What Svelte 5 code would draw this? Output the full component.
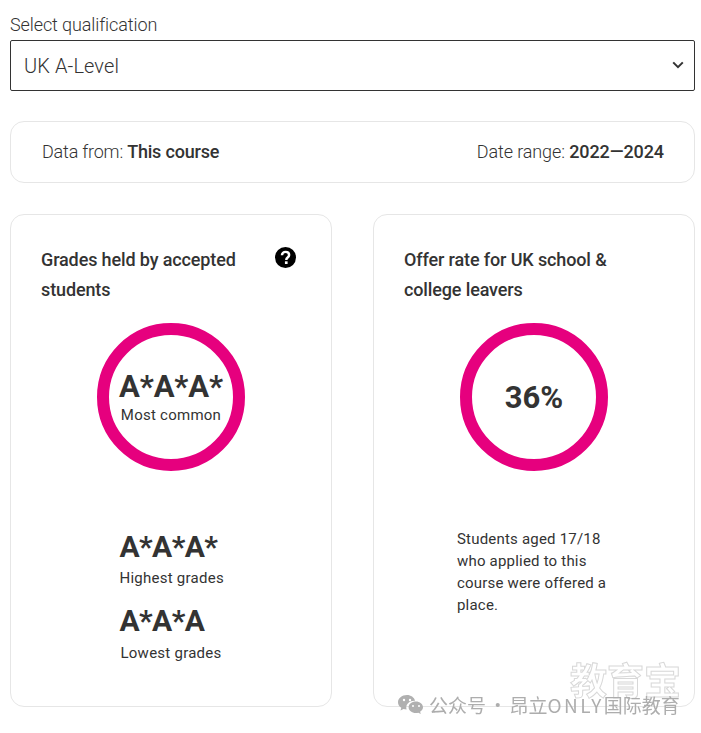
<script>
  const lower = [
    { grade: 'A*A*A*', label: 'Highest grades' },
    { grade: 'A*A*A', label: 'Lowest grades' }
  ];
</script>

<div class="page">
  <div class="label">Select qualification</div>
  <div class="select">
    <span>UK A-Level</span>
    <svg class="chev" width="12" height="8" viewBox="0 0 12 8"><path d="M1.2 1.4 6 6.200l4.800-4.800" fill="none" stroke="#333" stroke-width="2"/></svg>
  </div>

  <div class="bar">
    <span class="from">Data from: <b>This course</b></span>
    <span class="range">Date range: <b>2022—2024</b></span>
  </div>

  <div class="cards">
    <section class="card">
      <div class="head">
        <h3>Grades held by accepted students</h3>
        <svg class="help" width="21" height="21" viewBox="0 0 22 22">
          <circle cx="11" cy="11" r="11" fill="#000"/>
          <path d="M7.300 8.700c0-2.200 1.600-3.600 3.800-3.600s3.700 1.300 3.700 3.200c0 1.500-.9 2.200-1.800 2.900-.8.600-1.100 1-1.100 2v.4" fill="none" stroke="#fff" stroke-width="2.600"/>
          <rect x="10.400" y="15" width="2.800" height="2.800" fill="#fff"/>
        </svg>
      </div>
      <div class="ring-wrap">
        <div class="ring">
          <div class="big">A*A*A*</div>
          <div class="small">Most common</div>
        </div>
      </div>
      <div class="lower">
        {#each lower as item}
          <div class="big">{item.grade}</div>
          <div class="small cap">{item.label}</div>
        {/each}
      </div>
    </section>

    <section class="card">
      <div class="head">
        <h3>Offer rate for UK school &amp; college leavers</h3>
      </div>
      <div class="ring-wrap">
        <div class="ring"><div class="pct">36%</div></div>
      </div>
      <p class="note">Students aged 17/18 who applied to this course were offered a place.</p>
    </section>
  </div>

  <div class="mark-big">教育宝</div>
  <div class="mark">
    <svg width="27" height="22" viewBox="0 0 27 22">
      <path d="M10 1C4.800 1 1 4.300 1 8.200c0 2.300 1.300 4.200 3.300 5.600L3.500 16.500l3-1.600c1 .3 2 .5 3.100.5-.2-.7-.3-1.300-.3-2 0-3.800 3.500-6.700 8-6.700h.8C17.100 3.300 13.900 1 10 1z" fill="#b0b0b0"/>
      <path d="M26 13.300c0-3.200-3.200-5.800-7.200-5.800s-7.200 2.600-7.200 5.800 3.200 5.800 7.200 5.800c.9 0 1.700-.1 2.500-.4l2.500 1.400-.7-2.300c1.800-1.100 2.900-2.700 2.900-4.500z" fill="#b0b0b0"/>
      <circle cx="7" cy="6" r="1.200" fill="#fff"/><circle cx="13" cy="6" r="1.200" fill="#fff"/>
      <circle cx="16" cy="12" r="1" fill="#fff"/><circle cx="22" cy="12" r="1" fill="#fff"/>
    </svg>
    <span>公众号 · 昂立<span class="latin">ONLY</span>国际教育</span>
  </div>
</div>

<style>
  :global(body) { margin: 0; background: #fff; }
  .page {
    position: relative;
    width: 701px;
    height: 733px;
    box-sizing: border-box;
    padding: 14px 6px 0 10px;
    font-family: Roboto, "Liberation Sans", sans-serif;
    color: #333;
    overflow: hidden;
  }
  .label { font-size: 18px; font-weight: 300; line-height: 22px; margin-bottom: 4px; letter-spacing: -0.1px; }
  .select {
    height: 51px;
    box-sizing: border-box;
    border: 1px solid #333;
    border-radius: 2px;
    padding: 0 10px 0 13px;
    display: flex;
    align-items: center;
    justify-content: space-between;
    font-size: 20px;
    font-weight: 300;
    letter-spacing: 0.1px;
  }
  .chev { margin-top: -2px; }
  .bar {
    margin-top: 30px;
    height: 62px;
    box-sizing: border-box;
    border: 1px solid #e6e6e6;
    border-radius: 14px;
    padding: 0 30px 2px 31px;
    display: flex;
    align-items: center;
    justify-content: space-between;
    font-size: 18px;
    font-weight: 300;
  }
  .from { letter-spacing: -0.2px; }
  .range { letter-spacing: -0.1px; }
  b { font-weight: 500; }
  .cards {
    margin-top: 31px;
    display: grid;
    grid-template-columns: 322px 322px;
    justify-content: space-between;
  }
  .card {
    height: 493px;
    box-sizing: border-box;
    border: 1px solid #e6e6e6;
    border-radius: 14px;
    padding: 30px 30px 0;
  }
  .head { display: flex; justify-content: space-between; align-items: flex-start; min-height: 60px; }
  h3 { margin: 0; font-size: 18px; font-weight: 500; line-height: 30px; width: 220px; letter-spacing: -0.13px; }
  .help { margin: 2px 5px 0 0; }
  .ring-wrap { display: flex; justify-content: center; margin-top: 18px; }
  .ring {
    width: 148px;
    height: 148px;
    box-sizing: border-box;
    border: 12px solid #e6007e;
    border-radius: 50%;
    display: flex;
    flex-direction: column;
    align-items: center;
    justify-content: center;
  }
  .big { font-size: 30px; font-weight: 700; line-height: 38px; white-space: nowrap; letter-spacing: -0.6px; }
  .ring .big { margin: -1px 0; font-size: 31px; letter-spacing: -0.1px; }
  .small { font-size: 15px; line-height: 20px; letter-spacing: 0.25px; white-space: nowrap; }
  .pct { font-size: 31px; font-weight: 700; }
  .lower {
    width: 103px;
    margin: 57px auto 0;
  }
  .cap { text-align: center; margin: 2px 0 14px; }
  .cap:last-child { margin-top: 3px; }
  .note {
    margin: 57px 0 0 53px;
    width: 165px;
    font-size: 15px;
    line-height: 22px;
    letter-spacing: 0.2px;
  }
  .mark-big {
    position: absolute;
    left: 570px;
    top: 659px;
    font-family: "Noto Sans CJK SC", sans-serif;
    font-size: 37px;
    font-weight: 700;
    line-height: 40px;
    color: #fff;
    -webkit-text-stroke: 1px #d8d8d8;
    white-space: nowrap;
    filter: blur(0.4px);
  }
  .mark {
    position: absolute;
    left: 397px;
    top: 694px;
    display: flex;
    align-items: center;
    gap: 5px;
    font-family: "Noto Sans CJK SC", sans-serif;
    font-size: 19px;
    line-height: 22px;
    word-spacing: -2px;
    color: #adadad;
    white-space: nowrap;
    filter: blur(0.3px);
  }
  .latin { letter-spacing: 2.4px; }
</style>
